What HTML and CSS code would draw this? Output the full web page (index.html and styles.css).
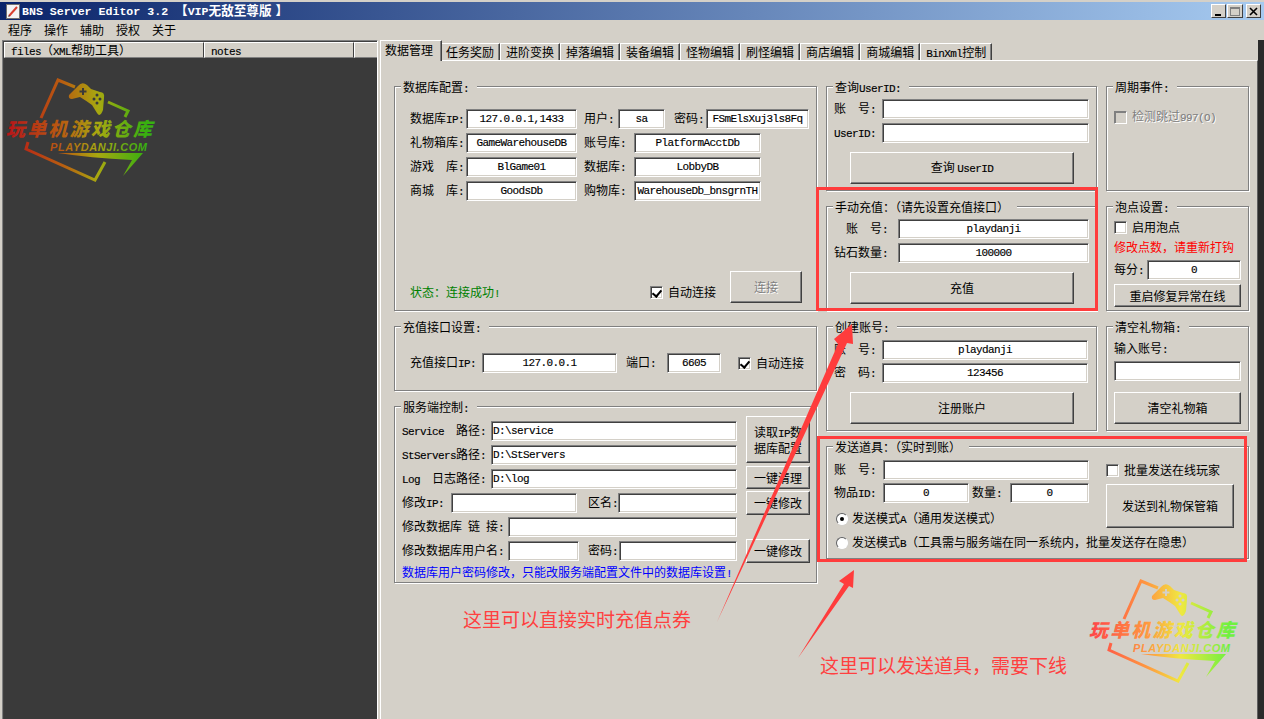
FILE: index.html
```html
<!DOCTYPE html>
<html lang="zh-CN">
<head>
	<meta charset="utf-8">
	<title>BNS Server Editor 3.2</title>
	<link rel="stylesheet" href="styles.css">
</head>
<body>
<div id="app">
	<div class="titlebar">
		<svg class="app-icon" width="15" height="15" viewBox="0 0 15 15">
			<rect x="0.5" y="0.5" width="13" height="14" fill="#f4f4f4" stroke="#707070"/>
			<path d="M3 12 L11 3" stroke="#d84030" stroke-width="2"/>
			<path d="M2 12 L3 13 L4 11 Z" fill="#303030"/>
		</svg>
		<span class="title-text">BNS Server Editor 3.2 <span class="title-cjk">【</span>VIP<span class="title-cjk">无敌至尊版</span><span class="title-cjk title-close">】</span></span>
		<div class="win-btns">
			<span class="win-btn"><svg width="9" height="9" viewBox="0 0 9 9"><rect x="1" y="7" width="6" height="2"/></svg></span>
			<span class="win-btn wide"><svg width="10" height="9" viewBox="0 0 10 9"><rect x="0.5" y="0.5" width="9" height="8" fill="none" stroke="#808080"/><rect x="0" y="0" width="10" height="2" fill="#808080"/></svg></span>
			<span class="win-btn close"><svg width="9" height="9" viewBox="0 0 9 9"><path d="M1 1 L8 8 M8 1 L1 8" stroke="#000" stroke-width="1.6"/></svg></span>
		</div>
	</div>
	<div class="menubar">
		<span>程序</span><span>操作</span><span>辅助</span><span>授权</span><span>关于</span>
	</div>
	<div class="work">
		<div class="files">
			<div class="files-head">
				<div class="hcell c1"><span class="en">files</span>&#xFF08;<span class="en">XML</span>帮助工具&#xFF09;</div>
				<div class="hcell c2"><span class="en">notes</span></div>
				<div class="hcell c3"></div>
			</div>
			<div class="files-body"></div>
		</div>
		<div class="tabbox">
			<div class="tabs">
				<div class="tab active">数据管理</div>
				<div class="tab">任务奖励</div>
				<div class="tab">进阶变换</div>
				<div class="tab">掉落编辑</div>
				<div class="tab">装备编辑</div>
				<div class="tab">怪物编辑</div>
				<div class="tab">刷怪编辑</div>
				<div class="tab">商店编辑</div>
				<div class="tab">商城编辑</div>
				<div class="tab"><span class="en">BinXml</span>控制</div>
			</div>
			<div class="panel">
				<div class="col-left">
					<div class="group h225">
						<div class="legend">数据库配置<span class="en">:</span></div>
						<div class="g-body db-body">
							<div class="rows">
								<div class="row">
									<span class="lb l56">数据库<span class="en">IP:</span></span><input class="in w111" value="127.0.0.1,1433">
									<span class="lb l34 ml7">用户<span class="en">:</span></span><input class="in w47" value="sa">
									<span class="lb l32 ml9">密码<span class="en">:</span></span><input class="in w103" value="FSmElsXuj3ls8Fq">
								</div>
								<div class="row">
									<span class="lb l56">礼物箱库<span class="en">:</span></span><input class="in w111" value="GameWarehouseDB">
									<span class="lb l50 ml7">账号库<span class="en">:</span></span><input class="in w127" value="PlatformAcctDb">
								</div>
								<div class="row">
									<span class="lb l56">游戏&emsp;库<span class="en">:</span></span><input class="in w111" value="BlGame01">
									<span class="lb l50 ml7">数据库<span class="en">:</span></span><input class="in w127" value="LobbyDB">
								</div>
								<div class="row">
									<span class="lb l56">商城&emsp;库<span class="en">:</span></span><input class="in w111" value="GoodsDb">
									<span class="lb l50 ml7">购物库<span class="en">:</span></span><input class="in w127" value="WarehouseDb_bnsgrnTH">
								</div>
							</div>
							<div class="db-foot">
								<span class="status">状态&#xFF1A;连接成功<span class="en">!</span></span>
								<span class="check on"></span><span class="lb">自动连接</span>
								<button class="btn off connect">连接</button>
							</div>
						</div>
					</div>
					<div class="group h65">
						<div class="legend">充值接口设置<span class="en">:</span></div>
						<div class="g-body pay-body">
							<div class="row">
								<span class="lb l72">充值接口<span class="en">IP:</span></span><input class="in w135" value="127.0.0.1">
								<span class="lb l41 ml9">端口<span class="en">:</span></span><input class="in w54" value="6605">
								<span class="check on ml17"></span><span class="lb">自动连接</span>
							</div>
						</div>
					</div>
					<div class="group h177">
						<div class="legend">服务端控制<span class="en">:</span></div>
						<div class="g-body srv-body">
							<div class="rows srv-rows">
								<div class="row"><span class="lb l89"><span class="en">Service&nbsp;&nbsp;</span>路径<span class="en">:</span></span><input class="in left w246" value="D:\service"></div>
								<div class="row"><span class="lb l89"><span class="en">StServers</span>路径<span class="en">:</span></span><input class="in left w246" value="D:\StServers"></div>
								<div class="row"><span class="lb l89"><span class="en">Log&nbsp;&nbsp;</span>日志路径<span class="en">:</span></span><input class="in left w246" value="D:\log"></div>
								<div class="row">
									<span class="lb l49">修改<span class="en">IP:</span></span><input class="in w126" value="">
									<span class="lb l30 ml11">区名<span class="en">:</span></span><input class="in w119" value="">
								</div>
								<div class="row"><span class="lb l106">修改数据库&ensp;链&ensp;接<span class="en">:</span></span><input class="in w229" value=""></div>
								<div class="row">
									<span class="lb l106">修改数据库用户名<span class="en">:</span></span><input class="in w71" value="">
									<span class="lb l31 ml9">密码<span class="en">:</span></span><input class="in w118" value="">
								</div>
								<div class="note-blue">数据库用户密码修改&#xFF0C;只能改服务端配置文件中的数据库设置<span class="en">!</span></div>
							</div>
							<div class="srv-btns">
								<button class="btn read">读取<span class="en">IP</span>数<br>据库配置</button>
								<button class="btn clean">一键清理</button>
								<button class="btn edit1">一键修改</button>
								<button class="btn edit2">一键修改</button>
							</div>
						</div>
					</div>
				</div>
				<div class="col-right">
					<div class="group">
						<div class="legend">查询<span class="en">UserID:</span></div>
						<div class="g-body mid-top">
							<div class="rows">
								<div class="row"><span class="lb l48">账&emsp;号<span class="en">:</span></span><input class="in w207" value=""></div>
								<div class="row"><span class="lb l48"><span class="en">UserID:</span></span><input class="in w207" value=""></div>
							</div>
							<button class="btn wide-btn q-btn">查询 <span class="en">UserID</span></button>
						</div>
					</div>
					<div class="group">
						<div class="legend">周期事件<span class="en">:</span></div>
						<div class="g-body cycle-body">
							<div class="check-row">
								<span class="check off"></span><span class="lb disabled">检测跳过<span class="en">997(O)</span></span>
							</div>
						</div>
					</div>
					<div class="group">
						<div class="legend">手动充值&#xFF1A;&#xFF08;请先设置充值接口&#xFF09;</div>
						<div class="g-body mid-top">
							<div class="rows">
								<div class="row"><span class="lb l64 ra">账&emsp;号<span class="en">:</span></span><input class="in w191" value="playdanji"></div>
								<div class="row"><span class="lb l64 ra">钻石数量<span class="en">:</span></span><input class="in w191" value="100000"></div>
							</div>
							<button class="btn wide-btn q-btn">充值</button>
						</div>
					</div>
					<div class="group">
						<div class="legend">泡点设置<span class="en">:</span></div>
						<div class="g-body bubble-body">
							<div class="check-row"><span class="check"></span><span class="lb">启用泡点</span></div>
							<div class="note-red">修改点数&#xFF0C;请重新打钩</div>
							<div class="row"><span class="lb l33">每分<span class="en">:</span></span><input class="in w94" value="0"></div>
							<button class="btn side-btn bubble-btn">重启修复异常在线</button>
						</div>
					</div>
					<div class="group">
						<div class="legend">创建账号<span class="en">:</span></div>
						<div class="g-body create-body">
							<div class="rows tight">
								<div class="row"><span class="lb l48">账&emsp;号<span class="en">:</span></span><input class="in w206" value="playdanji"></div>
								<div class="row"><span class="lb l48">密&emsp;码<span class="en">:</span></span><input class="in w206" value="123456"></div>
							</div>
							<button class="btn wide-btn q-btn">注册账户</button>
						</div>
					</div>
					<div class="group">
						<div class="legend">清空礼物箱<span class="en">:</span></div>
						<div class="g-body clear-body">
							<div class="clear-label">输入账号<span class="en">:</span></div>
							<input class="in w127 clear-in" value="">
							<button class="btn side-btn clear-btn">清空礼物箱</button>
						</div>
					</div>
					<div class="group span2">
						<div class="legend">发送道具&#xFF1A;&#xFF08;实时到账&#xFF09;</div>
						<div class="g-body send-body">
							<div class="send-top">
								<div class="send-left">
									<div class="rows tight">
										<div class="row"><span class="lb l49">账&emsp;号<span class="en">:</span></span><input class="in w206" value=""></div>
										<div class="row">
											<span class="lb l49">物品<span class="en">ID:</span></span><input class="in w86" value="0">
											<span class="lb l38 ml3">数量<span class="en">:</span></span><input class="in w79" value="0">
										</div>
									</div>
									<div class="radio-row first"><span class="radio on"></span><span class="lb">发送模式<span class="en">A</span>&#xFF08;通用发送模式&#xFF09;</span></div>
								</div>
								<div class="send-right">
									<div class="check-row batch"><span class="check"></span><span class="lb">批量发送在线玩家</span></div>
									<button class="btn send-btn">发送到礼物保管箱</button>
								</div>
							</div>
							<div class="radio-row"><span class="radio"></span><span class="lb">发送模式<span class="en">B</span>&#xFF08;工具需与服务端在同一系统内&#xFF0C;批量发送存在隐患&#xFF09;</span></div>
						</div>
					</div>
				</div>
			</div>
		</div>
		<div class="edge"></div>
	</div>
</div>

<!-- logos, red marks and notes drawn over the window -->
<svg class="logo logo-dark" width="170" height="120" viewBox="0 70 170 120">
	<defs>
		<linearGradient id="darkGrad" gradientUnits="userSpaceOnUse" x1="10" y1="0" x2="145" y2="0">
			<stop offset="0" stop-color="#b81818"/>
			<stop offset="0.4" stop-color="#b86010"/>
			<stop offset="0.65" stop-color="#a8a810"/>
			<stop offset="1" stop-color="#38b010"/>
		</linearGradient>
	</defs>
	<g fill="none" stroke="url(#darkGrad)" stroke-width="3">
		<path d="M75 87 L58 80 L41 118"/>
		<path d="M108 102 L128 111 L125 117"/>
		<path d="M28 142 L26 149 L95 180 L105 162"/>
	</g>
	<path fill="url(#darkGrad)" d="M69 95 L78 86 Q82 81 87 85 L91 89 L100 92 Q105 92 104 98 L103 110 Q100 118 97 113 L92 105 Q85 100 80 97 L72 99 Q68 99 69 95 Z"/>
	<path d="M83 88 V95 M79.5 91.5 H86.500" stroke="#3a3a3a" stroke-width="2"/>
	<g fill="#3a3a3a"><circle cx="97" cy="95" r="1.500"/><circle cx="94" cy="99" r="1.500"/><circle cx="100" cy="99" r="1.500"/><circle cx="97" cy="103" r="1.500"/></g>
	<text class="logo-cn" x="6" y="136" textLength="146" lengthAdjust="spacing" fill="url(#darkGrad)">玩单机游戏仓库</text>
	<text class="logo-en" x="50" y="151" textLength="97" lengthAdjust="spacing" fill="url(#darkGrad)">PLAYDANJI.COM</text>
	<path fill="url(#darkGrad)" d="M58 153 L143 153 L123 176 L132 160 Q90 158 58 153 Z"/>
</svg>
<svg class="logo logo-light" width="170" height="120" viewBox="0 70 170 120">
	<defs>
		<linearGradient id="lightGrad" gradientUnits="userSpaceOnUse" x1="10" y1="0" x2="145" y2="0">
			<stop offset="0" stop-color="#ff4848"/>
			<stop offset="0.4" stop-color="#ff9840"/>
			<stop offset="0.65" stop-color="#f0e840"/>
			<stop offset="1" stop-color="#70f040"/>
		</linearGradient>
	</defs>
	<g fill="none" stroke="url(#lightGrad)" stroke-width="3">
		<path d="M75 87 L58 80 L41 118"/>
		<path d="M108 102 L128 111 L125 117"/>
		<path d="M28 142 L26 149 L95 180 L105 162"/>
	</g>
	<path fill="url(#lightGrad)" d="M69 95 L78 86 Q82 81 87 85 L91 89 L100 92 Q105 92 104 98 L103 110 Q100 118 97 113 L92 105 Q85 100 80 97 L72 99 Q68 99 69 95 Z"/>
	<path d="M83 88 V95 M79.5 91.5 H86.500" stroke="#d4d0c8" stroke-width="2"/>
	<g fill="#d4d0c8"><circle cx="97" cy="95" r="1.500"/><circle cx="94" cy="99" r="1.500"/><circle cx="100" cy="99" r="1.500"/><circle cx="97" cy="103" r="1.500"/></g>
	<text class="logo-cn" x="6" y="136" textLength="146" lengthAdjust="spacing" fill="url(#lightGrad)">玩单机游戏仓库</text>
	<text class="logo-en" x="50" y="151" textLength="97" lengthAdjust="spacing" fill="url(#lightGrad)">PLAYDANJI.COM</text>
	<path fill="url(#lightGrad)" d="M58 153 L143 153 L123 176 L132 160 Q90 158 58 153 Z"/>
</svg>
<svg class="marks" width="1264" height="719" viewBox="0 0 1264 719">
	<rect x="817.500" y="188.500" width="279" height="121" fill="none" stroke="#ff3c3c" stroke-width="3"/>
	<rect x="818.500" y="437.500" width="427" height="123" fill="none" stroke="#ff3c3c" stroke-width="3"/>
	<path fill="#ff3c3c" d="M717 622 L838 344 L834 339 L852 324 L853 344 L847 343 Z"/>
	<path fill="#ff3c3c" d="M798 658 L844 584 L839 581 L854 570 L853 588 L849 586 Z"/>
</svg>
<div class="tip tip-a">这里可以直接实时充值点券</div>
<div class="tip tip-b">这里可以发送道具&#xFF0C;需要下线</div>
</body>
</html>
```

FILE: styles.css
```css
* {
	box-sizing: border-box;
}
html, body {
	margin: 0;
	padding: 0;
}
body {
	width: 1264px;
	height: 719px;
	overflow: hidden;
	position: relative;
	background: #d4d0c8;
	color: #000;
	font: 12px/14px "Noto Sans CJK SC", sans-serif;
}
.en {
	font: 11px/14px "Liberation Mono", monospace;
	letter-spacing: -0.6px;
	-webkit-text-stroke: 0.15px currentColor;
}
#app {
	display: flex;
	flex-direction: column;
	height: 719px;
}

/* title + menu */
.titlebar {
	display: flex;
	align-items: center;
	height: 18px;
	margin-top: 2px;
	padding-left: 6px;
	background: linear-gradient(to right, #0a246a, #a6caf0);
}
.app-icon {
	margin-right: 1px;
}
.title-text {
	color: #fff;
	font: bold 11.6px/16px "Liberation Mono", monospace;
	white-space: pre;
}
.title-cjk {
	font: bold 12.600px/16px "Noto Sans CJK SC", sans-serif;
}
.title-close {
	margin-left: 4px;
}
.win-btns {
	display: flex;
	margin-left: auto;
	margin-right: 3px;
}
.win-btn {
	display: flex;
	align-items: center;
	justify-content: center;
	width: 15px;
	height: 14px;
	background: #d4d0c8;
	border: 1px solid;
	border-color: #fff #404040 #404040 #fff;
}
.win-btn.wide {
	width: 16px;
	margin: 0 3px 0 1px;
}
.menubar {
	display: flex;
	align-items: center;
	gap: 12px;
	height: 20px;
	padding-left: 8px;
}

/* left tree */
.work {
	display: flex;
	flex: 1;
	min-height: 0;
}
.files {
	display: flex;
	flex-direction: column;
	width: 376px;
	margin-left: 2px;
	border-top: 1px solid #808080;
	border-left: 1px solid #808080;
	border-right: 1px solid #fff;
	box-shadow: inset 1px 1px 0 #404040;
	padding: 1px 0 0 1px;
}
.files-head {
	display: flex;
	height: 16px;
}
.hcell {
	height: 16px;
	padding-left: 6px;
	line-height: 13px;
	border: 1px solid;
	border-color: #fff #404040 #808080 #fff;
}
.c1 {
	width: 200px;
}
.c2 {
	width: 150px;
}
.c3 {
	flex: 1;
	border-right: 0;
}
.files-body {
	flex: 1;
	background: #3a3a3a;
}

/* tabs */
.tabbox {
	display: flex;
	flex-direction: column;
	width: 878px;
	margin-left: 2px;
}
.tabs {
	display: flex;
	align-items: flex-end;
	height: 20px;
}
.tab {
	height: 17px;
	padding: 0 5px;
	line-height: 15px;
	border: 1px solid #fff;
	border-width: 1px 0 0 1px;
	border-right: 1px solid #404040;
	box-shadow: inset -1px 0 0 #808080;
	white-space: nowrap;
}
.tab.active {
	position: relative;
	height: 21px;
	margin: 0 -2px -1px 0;
	padding: 0 8px 0 4px;
	line-height: 18px;
	background: #d4d0c8;
	z-index: 1;
}
.panel {
	display: flex;
	flex: 1;
	gap: 9px;
	min-height: 0;
	padding: 25px 0 0 13px;
	border: 1px solid #fff;
	border-width: 1px 0 0 1px;
	border-right: 1px solid #606060;
}
.col-left {
	display: flex;
	flex-direction: column;
	gap: 15px;
	width: 423px;
}
.col-right {
	display: grid;
	grid-template-columns: 271px 143px;
	grid-auto-rows: 105px;
	column-gap: 9px;
	row-gap: 15px;
	width: 423px;
}
.span2 {
	grid-column: 1 / 3;
	height: 113px;
}
.edge {
	width: 6px;
	background: #2a2a2a;
}

/* group boxes */
.group {
	display: flex;
	flex-direction: column;
	border: 1px solid #808080;
	box-shadow: inset 1px 1px 0 #fff, 1px 1px 0 #fff;
}
.h225 {
	height: 225px;
}
.h65 {
	height: 65px;
}
.h177 {
	height: 177px;
}
.legend {
	align-self: flex-start;
	height: 14px;
	margin: -7px 0 0 6px;
	padding: 0 8px 0 2px;
	background: #d4d0c8;
	white-space: nowrap;
}
.g-body {
	display: flex;
	flex-direction: column;
	flex: 1;
	padding-left: 7px;
}
.db-body {
	padding: 15px 0 7px 15px;
}
.db-foot {
	display: flex;
	align-items: center;
	margin-top: auto;
	height: 32px;
}
.status {
	width: 240px;
	margin-top: 12px;
	color: #008000;
}
.db-foot .check {
	margin-top: 10px;
}
.db-foot .lb {
	margin: 10px 0 0 5px;
}
.connect {
	width: 72px;
	height: 32px;
	margin-left: 14px;
}
.pay-body {
	padding: 19px 0 0 15px;
}
.pay-body .check + .lb {
	margin-left: 5px;
}
.srv-body {
	flex-direction: row;
	padding: 7px 0 0 7px;
}
.srv-rows {
	width: 335px;
}
.srv-btns {
	display: flex;
	flex-direction: column;
	width: 64px;
	margin: -5px 0 0 9px;
}
.read {
	height: 47px;
	line-height: 13px;
}
.clean {
	height: 23px;
	margin-top: 3px;
}
.edit1 {
	height: 24px;
	margin-top: 2px;
}
.edit2 {
	height: 24px;
	margin-top: 24px;
}
.note-blue {
	color: #0000ff;
	white-space: nowrap;
}
.mid-top {
	padding-top: 5px;
}
.create-body {
	padding-top: 6px;
}
.cycle-body {
	padding-top: 15px;
}
.bubble-body {
	padding-top: 6px;
}
.note-red {
	height: 14px;
	margin: 6px 0;
	color: #ff0000;
	white-space: nowrap;
}
.clear-body {
	padding-top: 7px;
}
.clear-label {
	height: 14px;
}
.clear-in {
	margin-top: 6px;
	flex: none;
}
.send-body {
	padding-top: 6px;
}
.send-top {
	display: flex;
}
.send-left {
	width: 255px;
}
.send-right {
	margin-left: 17px;
}
.batch {
	height: 20px;
}
.send-btn {
	display: block;
	width: 128px;
	height: 44px;
	margin-top: 4px;
}

/* rows + controls */
.rows {
	display: flex;
	flex-direction: column;
	gap: 4px;
}
.rows.tight {
	gap: 3px;
}
.row {
	display: flex;
	align-items: center;
	height: 20px;
	flex: none;
}
.check-row, .radio-row {
	display: flex;
	align-items: center;
	flex: none;
}
.check-row {
	min-height: 13px;
}
.check-row .lb {
	margin-left: 5px;
}
.radio-row {
	height: 24px;
	padding-left: 2px;
}
.radio-row.first {
	margin-top: 4px;
}
.radio-row .lb {
	margin-left: 4px;
	white-space: nowrap;
}
.lb {
	flex: none;
	white-space: nowrap;
}
.ra {
	padding-right: 10px;
	text-align: right;
}
.disabled {
	color: #808080;
	text-shadow: 1px 1px 0 #fff;
}
.in {
	flex: none;
	height: 20px;
	padding: 0 1px;
	background: #fff;
	color: #000;
	font: 11px "Liberation Mono", monospace;
	letter-spacing: -0.6px;
	-webkit-text-stroke: 0.15px #000;
	text-align: center;
	border: 1px solid;
	border-color: #808080 #fff #fff #808080;
	box-shadow: inset 1px 1px 0 #404040, inset -1px -1px 0 #d4d0c8;
	border-radius: 0;
	outline: 0;
}
.in.left {
	text-align: left;
}
.btn {
	display: block;
	padding: 0;
	background: #d4d0c8;
	color: #000;
	font: 12px/14px "Noto Sans CJK SC", sans-serif;
	border: 1px solid;
	border-color: #fff #404040 #404040 #fff;
	box-shadow: inset -1px -1px 0 #808080;
	border-radius: 0;
}
.btn.off {
	color: #808080;
	text-shadow: 1px 1px 0 #fff;
}
.wide-btn {
	width: 224px;
	height: 32px;
	margin-left: 16px;
}
.q-btn {
	margin-top: 9px;
}
.side-btn {
	width: 127px;
	flex: none;
}
.bubble-btn {
	height: 23px;
	margin-top: 4px;
}
.clear-btn {
	height: 32px;
	margin-top: 11px;
}
.check {
	position: relative;
	display: block;
	flex: none;
	width: 13px;
	height: 13px;
	background: #fff;
	border: 1px solid;
	border-color: #808080 #fff #fff #808080;
	box-shadow: inset 1px 1px 0 #404040, inset -1px -1px 0 #d4d0c8;
}
.check.off {
	background: #d4d0c8;
	box-shadow: inset 1px 1px 0 #808080;
}
.check.on::after {
	content: "";
	position: absolute;
	left: 3px;
	top: 1px;
	width: 4px;
	height: 7px;
	border: solid #000;
	border-width: 0 2px 2px 0;
	transform: rotate(40deg);
}
.radio {
	position: relative;
	display: block;
	flex: none;
	width: 12px;
	height: 12px;
	background: #fff;
	border-radius: 50%;
	border: 1px solid;
	border-color: #606060 #fff #fff #606060;
	box-shadow: 0 0 0 0.5px #d0d0d0;
}
.radio.on::after {
	content: "";
	position: absolute;
	left: 3px;
	top: 3px;
	width: 4px;
	height: 4px;
	background: #000;
	border-radius: 50%;
}

/* widths */
.l30 { width: 30px; }
.l31 { width: 31px; }
.l32 { width: 32px; }
.l33 { width: 33px; }
.l34 { width: 34px; }
.l38 { width: 38px; }
.l41 { width: 41px; }
.l48 { width: 48px; }
.l49 { width: 49px; }
.l50 { width: 50px; }
.l56 { width: 56px; }
.l64 { width: 64px; }
.l72 { width: 72px; }
.l89 { width: 89px; }
.l106 { width: 106px; }
.w47 { width: 47px; }
.w54 { width: 54px; }
.w71 { width: 71px; }
.w79 { width: 79px; }
.w86 { width: 86px; }
.w94 { width: 94px; }
.w103 { width: 103px; }
.w111 { width: 111px; }
.w118 { width: 118px; }
.w119 { width: 119px; }
.w126 { width: 126px; }
.w127 { width: 127px; }
.w135 { width: 135px; }
.w191 { width: 191px; }
.w206 { width: 206px; }
.w207 { width: 207px; }
.w229 { width: 229px; }
.w246 { width: 246px; }
.ml3 { margin-left: 3px; }
.ml7 { margin-left: 7px; }
.ml9 { margin-left: 9px; }
.ml11 { margin-left: 11px; }
.ml17 { margin-left: 17px; }

/* over the window */
.logo, .marks, .tip {
	position: absolute;
	pointer-events: none;
}
.logo-dark {
	left: 0;
	top: 70px;
}
.logo-light {
	left: 1083px;
	top: 571px;
}
.logo-cn {
	font: italic 900 19px "Noto Sans CJK SC", sans-serif;
}
.logo-en {
	font: italic bold 11px "Liberation Sans", sans-serif;
}
.marks {
	left: 0;
	top: 0;
}
.tip {
	color: #ff4040;
	font: 19px/24px "Noto Sans CJK SC", sans-serif;
	white-space: nowrap;
}
.tip-a {
	left: 463px;
	top: 607px;
}
.tip-b {
	left: 820px;
	top: 653px;
}
```
